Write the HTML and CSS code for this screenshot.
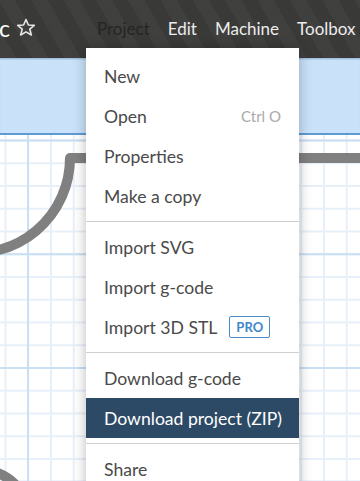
FILE: index.html
```html
<!DOCTYPE html>
<html lang="en">
<head>
<meta charset="utf-8">
<title>Project menu</title>
<link rel="stylesheet" href="styles.css">
</head>
<body>
<div class="app">
  <header class="topbar">
    <div class="brand">
      <span class="brand-name">c</span>
      <svg class="star" width="20" height="19" viewBox="0 0 20 19" aria-hidden="true">
        <path d="M10 1.5 L12.4 7 L18.3 7.4 L13.8 11.2 L15.3 17 L10 13.9 L4.7 17 L6.2 11.2 L1.7 7.4 L7.6 7 Z" fill="none" stroke="#e6e6e6" stroke-width="1.6" stroke-linejoin="round"/>
      </svg>
    </div>
    <nav class="mainnav">
      <span class="nav-item active">Project</span>
      <span class="nav-item">Edit</span>
      <span class="nav-item">Machine</span>
      <span class="nav-item">Toolbox</span>
    </nav>
  </header>
  <div class="toolband"></div>
  <main class="canvas">
    <svg class="drawing" width="360" height="346" viewBox="0 135 360 346" aria-hidden="true">
      <path d="M 380 158 L 70 158 A 95 95 0 0 1 -41.5 251.6" fill="none" stroke="#808080" stroke-width="10" stroke-linejoin="round"/>
      <circle cx="-20" cy="520" r="50" fill="none" stroke="#808080" stroke-width="10"/>
    </svg>
  </main>
  <div class="menu">
    <ul class="menu-group">
      <li class="menu-item">New</li>
      <li class="menu-item">Open<span class="shortcut">Ctrl O</span></li>
      <li class="menu-item">Properties</li>
      <li class="menu-item">Make a copy</li>
    </ul>
    <hr class="sep">
    <ul class="menu-group">
      <li class="menu-item">Import SVG</li>
      <li class="menu-item">Import g-code</li>
      <li class="menu-item">Import 3D STL<span class="pro">PRO</span></li>
    </ul>
    <hr class="sep">
    <ul class="menu-group">
      <li class="menu-item">Download g-code</li>
      <li class="menu-item selected">Download project (ZIP)</li>
    </ul>
    <hr class="sep">
    <ul class="menu-group">
      <li class="menu-item">Share</li>
    </ul>
  </div>
</div>
</body>
</html>
```

FILE: styles.css
```css
* { box-sizing: border-box; }
html, body {
  margin: 0;
  padding: 0;
  width: 360px;
  height: 481px;
  overflow: hidden;
  font-family: Lato, "Open Sans", "Liberation Sans", sans-serif;
}
.app {
  position: relative;
  width: 360px;
  height: 481px;
  display: flex;
  flex-direction: column;
  overflow: hidden;
}
.topbar {
  height: 58px;
  flex: none;
  display: flex;
  align-items: center;
  background-color: #3b3b39;
  background-image:
    repeating-linear-gradient(60deg, rgba(255,255,255,0.025) 0 14px, rgba(0,0,0,0.03) 14px 28px);
}
.brand {
  display: flex;
  align-items: center;
  gap: 6px;
  margin-left: -1px;
  margin-top: -2px;
}
.brand-name {
  color: #ffffff;
  font-size: 23px;
  line-height: 1;
}
.star { display: block; margin-top: -1px; }
.mainnav {
  display: flex;
  gap: 18px;
  margin-left: 61px;
  margin-top: -2px;
}
.nav-item {
  color: #ececec;
  font-size: 17px;
  line-height: 1;
}
.nav-item.active { color: #252525; }
.toolband {
  height: 77px;
  flex: none;
  background: #c9e2f9;
  border-top: 1px solid #9fbfdd;
  border-bottom: 2px solid #5e9bd3;
  box-shadow: inset 0 1px 1px rgba(60,100,150,0.15);
}
.canvas {
  position: relative;
  flex: 1;
  background-color: #ffffff;
  background-image:
    linear-gradient(to right, #c9dff3 0 2px, transparent 2px),
    linear-gradient(to bottom, #c9dff3 0 2px, transparent 2px),
    linear-gradient(to right, #e7f0f9 0 2px, transparent 2px),
    linear-gradient(to bottom, #e7f0f9 0 2px, transparent 2px);
  background-size: 113.75px 100%, 100% 113.75px, 22.75px 100%, 100% 22.75px;
  background-position: 27px 0, 0 4.5px, 4.5px 0, 0 4.5px;
}
.drawing {
  position: absolute;
  left: 0;
  top: 0;
  display: block;
}
.menu {
  position: absolute;
  left: 86px;
  top: 48px;
  width: 213px;
  background: #ffffff;
  padding-top: 8px;
  box-shadow: 0 2px 12px rgba(0,0,0,0.28);
}
.menu-group {
  list-style: none;
  margin: 0;
  padding: 0;
}
.menu-item {
  height: 40px;
  display: flex;
  align-items: center;
  padding: 0 18px;
  font-size: 17.6px;
  color: #4a4a4a;
  white-space: nowrap;
}
.menu-item.selected {
  background: #2c4a65;
  color: #ffffff;
}
.shortcut {
  margin-left: auto;
  font-size: 15px;
  color: #a9a9a9;
}
.pro {
  margin-left: 12px;
  height: 22px;
  width: 41px;
  display: flex;
  align-items: center;
  justify-content: center;
  border: 1px solid #4a8cca;
  border-radius: 2px;
  color: #3f87c9;
  font-size: 13px;
  font-weight: 700;
  letter-spacing: 0.2px;
}
.sep {
  margin: 5px 0 5px;
  border: 0;
  height: 1px;
  background: #cfcfcf;
}
```
